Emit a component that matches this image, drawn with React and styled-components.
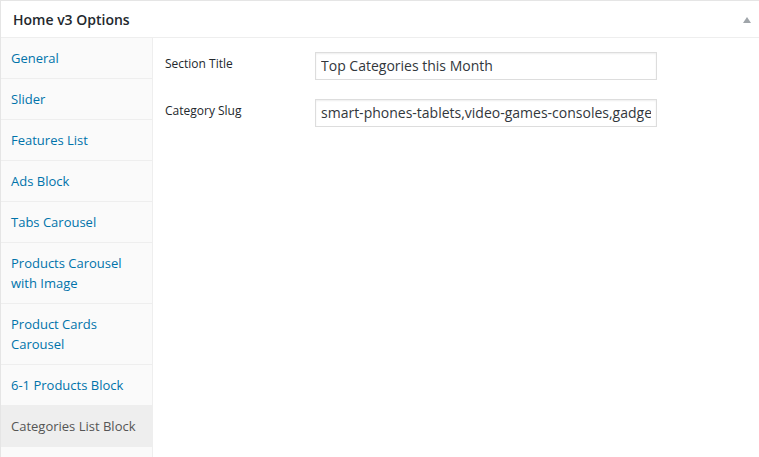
import React from 'react'
import styled, { createGlobalStyle } from 'styled-components'

const Global = createGlobalStyle`
  html, body {
    margin: 0;
    overflow: hidden;
    background: #fff;
    font-family: 'Open Sans', 'Liberation Sans', sans-serif;
  }
`

const tabs = [
  'General',
  'Slider',
  'Features List',
  'Ads Block',
  'Tabs Carousel',
  'Products Carousel with Image',
  'Product Cards Carousel',
  '6-1 Products Block',
  'Categories List Block',
]

function App() {
  return (
    <>
      <Global />
      <Metabox>
        <Header>
          <h2>Home v3 Options</h2>
          <Toggle />
        </Header>
        <Body>
          <Sidebar>
            {tabs.map((t) => (
              <Tab key={t} active={t === 'Categories List Block'}>
                {t}
              </Tab>
            ))}
          </Sidebar>
          <Fields>
            <Label>Section Title</Label>
            <Input defaultValue="Top Categories this Month" />
            <Label>Category Slug</Label>
            <Input defaultValue="smart-phones-tablets,video-games-consoles,gadgets" />
          </Fields>
        </Body>
      </Metabox>
    </>
  )
}

export default App

const Metabox = styled.div`
  width: 760px;
  height: 457px;
  border: 1px solid #e5e5e5;
  border-bottom: 0;
  background: #fff;
  box-sizing: border-box;
  display: flex;
  flex-direction: column;
`

const Header = styled.div`
  height: 36px;
  flex-shrink: 0;
  border-bottom: 1px solid #eee;
  display: flex;
  align-items: center;
  padding: 0 0 0 12px;

  h2 {
    margin: 0;
    font-size: 14px;
    font-weight: 600;
    color: #23282d;
    width: 730px;
  }
`

const Toggle = styled.span`
  width: 0;
  height: 0;
  border-left: 4px solid transparent;
  border-right: 4px solid transparent;
  border-bottom: 6px solid #a0a5aa;
  margin-top: 1px;
`

const Body = styled.div`
  display: flex;
  flex: 1;
  min-height: 0;
`

const Sidebar = styled.ul`
  list-style: none;
  margin: 0;
  padding: 0;
  width: 151px;
  background: #fafafa;
  border-right: 1px solid #eee;
`

const Tab = styled.li`
  padding: 10px 10px;
  font-size: 13px;
  line-height: 20px;
  border-bottom: 1px solid #eee;
  color: ${(p) => (p.active ? '#555' : '#0073aa')};
  background: ${(p) => (p.active ? '#eee' : 'transparent')};
`

const Fields = styled.div`
  display: grid;
  grid-template-columns: 150px 342px;
  grid-auto-rows: 28px;
  row-gap: 19px;
  align-content: start;
  padding: 14px 0 0 12px;
`

const Label = styled.label`
  font-size: 12px;
  line-height: 20px;
  color: #23282d;
  padding-top: 2px;
`

const Input = styled.input`
  box-sizing: border-box;
  width: 342px;
  height: 28px;
  margin: 0;
  padding: 2px 5px 4px;
  border: 1px solid #ddd;
  box-shadow: inset 0 1px 2px rgba(0, 0, 0, 0.07);
  font-family: 'Open Sans', 'Liberation Sans', sans-serif;
  font-size: 14px;
  color: #32373c;
  outline: none;
`
